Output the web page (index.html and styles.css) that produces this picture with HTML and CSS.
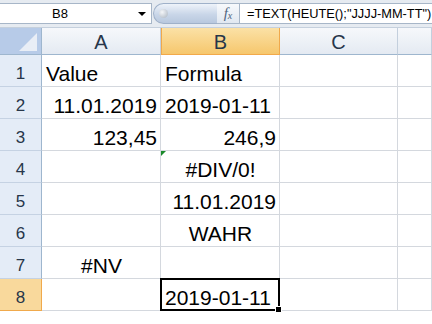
FILE: index.html
```html
<!DOCTYPE html>
<html lang="de">
<head>
    <meta charset="UTF-8">
    <title>Tabelle</title>
    <link rel="stylesheet" href="styles.css">
</head>
<body>
    <div class="toolbar">
        <div class="namebox">
            <span class="name">B8</span>
            <span class="arrow"></span>
        </div>
        <div class="pill"><span class="knob"></span></div>
        <div class="fx"><i>f</i><small>x</small></div>
        <div class="formula">=TEXT(HEUTE();"JJJJ-MM-TT")</div>
    </div>

    <div class="sheet">
        <!-- header row -->
        <div class="corner">
            <svg width="41" height="27" viewBox="0 0 41 27">
                <polygon points="37,5 37,23 19,23" fill="#e9eef6"/>
            </svg>
        </div>
        <div class="colhead">A</div>
        <div class="colhead active">B</div>
        <div class="colhead">C</div>
        <div class="colhead"></div>

        <div class="rowhead">1</div>
        <div class="cell">Value</div>
        <div class="cell">Formula</div>
        <div class="cell"></div>
        <div class="cell"></div>

        <div class="rowhead">2</div>
        <div class="cell right">11.01.2019</div>
        <div class="cell">2019-01-11</div>
        <div class="cell"></div>
        <div class="cell"></div>

        <div class="rowhead">3</div>
        <div class="cell right">123,45</div>
        <div class="cell right">246,9</div>
        <div class="cell"></div>
        <div class="cell"></div>

        <div class="rowhead">4</div>
        <div class="cell"></div>
        <div class="cell center note">#DIV/0!</div>
        <div class="cell"></div>
        <div class="cell"></div>

        <div class="rowhead">5</div>
        <div class="cell"></div>
        <div class="cell right">11.01.2019</div>
        <div class="cell"></div>
        <div class="cell"></div>

        <div class="rowhead">6</div>
        <div class="cell"></div>
        <div class="cell center">WAHR</div>
        <div class="cell"></div>
        <div class="cell"></div>

        <div class="rowhead">7</div>
        <div class="cell center">#NV</div>
        <div class="cell"></div>
        <div class="cell"></div>
        <div class="cell"></div>

        <div class="rowhead active">8</div>
        <div class="cell"></div>
        <div class="cell selected">2019-01-11</div>
        <div class="cell"></div>
        <div class="cell"></div>
    </div>
</body>
</html>
```

FILE: styles.css
```css
* {
    margin: 0;
    padding: 0;
    box-sizing: border-box;
}
html, body {
    width: 432px;
    height: 324px;
    overflow: hidden;
}
body {
    background: #fff;
    font-family: "Liberation Sans", Arial, sans-serif;
    color: #000;
}

/* formula bar */
.toolbar {
    height: 28px;
    display: flex;
    align-items: flex-start;
    padding-top: 3px;
    background: #e6ebf1;
    border-bottom: 1px solid #c5d0dd;
}
.namebox {
    width: 152px;
    height: 21px;
    background: #fff;
    border: 1px solid #a7b6c8;
    border-left: none;
    display: flex;
    align-items: center;
}
.name {
    flex: 1;
    text-align: center;
    font-size: 13px;
    padding-right: 18px;
}
.arrow {
    width: 0;
    height: 0;
    border-left: 4px solid transparent;
    border-right: 4px solid transparent;
    border-top: 4px solid #000;
    margin-right: 5px;
}
.pill {
    width: 64px;
    height: 21px;
    margin-left: 1px;
    border-radius: 11px 0 0 11px;
    background: linear-gradient(#eef3fa, #c9d6e8 55%, #b8c8de);
    border: 1px solid #9fb1c9;
    border-right: none;
    display: flex;
    align-items: center;
    padding-left: 5px;
}
.knob {
    width: 9px;
    height: 9px;
    border-radius: 50%;
    background: radial-gradient(circle at 35% 35%, #f4f6f9, #a9b3bf);
}
.fx {
    width: 22px;
    height: 21px;
    background: linear-gradient(#f7f9fc, #e1e8f1);
    border-top: 1px solid #a7b6c8;
    border-bottom: 1px solid #a7b6c8;
    font-family: "Liberation Serif", serif;
    color: #4f6480;
    font-size: 15px;
    display: flex;
    align-items: center;
    justify-content: center;
    font-style: italic;
}
.fx small {
    font-size: 10px;
    margin-top: 4px;
}
.formula {
    flex: 1;
    height: 21px;
    background: #fff;
    border: 1px solid #a7b6c8;
    border-right: none;
    font-size: 12.8px;
    line-height: 19px;
    padding-left: 7px;
    white-space: nowrap;
}

/* grid */
.sheet {
    display: grid;
    grid-template-columns: 42px 119px 119px 118px 34px;
    grid-template-rows: 27px repeat(8, 32px) 9px;
}
.corner {
    background: #b7cbe8;
    border-right: 1px solid #9eb6ce;
    border-bottom: 1px solid #9eb6ce;
}
.corner svg {
    display: block;
}
.colhead {
    background: linear-gradient(#f6f8fb, #e4eaf2);
    border-right: 1px solid #c3cfdd;
    border-bottom: 1px solid #9eb6ce;
    color: #27364a;
    font-size: 20px;
    text-align: center;
    line-height: 27px;
    padding-top: 1px;
}
.colhead.active {
    background: linear-gradient(#fbe1a6, #f6c76d);
    border-left: 1px solid #f0a94c;
    border-right: 1px solid #f0a94c;
    border-bottom: 1px solid #f2a94a;
}
.rowhead {
    background: #e4ecf7;
    border-right: 1px solid #9eb6ce;
    border-bottom: 1px solid #c5d2e3;
    color: #27364a;
    font-size: 17px;
    text-align: center;
    line-height: 22px;
    padding-top: 8px;
}
.rowhead.active {
    background: #f9d99c;
    border-right: 1px solid #f0a94c;
    border-bottom: 1px solid #f0a94c;
}
.cell {
    border-right: 1px solid #d4d8de;
    border-bottom: 1px solid #d4d8de;
    font-size: 21px;
    line-height: 22px;
    padding: 8px 3px 1px 4px;
    white-space: nowrap;
    position: relative;
}
.cell.right {
    text-align: right;
}
.cell.center {
    text-align: center;
}
.note::before {
    content: "";
    position: absolute;
    left: 0;
    top: 0;
    border-top: 5px solid #1a8a2a;
    border-right: 5px solid transparent;
}
.selected::after {
    content: "";
    position: absolute;
    left: -1px;
    top: -1px;
    right: -1px;
    bottom: -1px;
    border: 2px solid #000;
}
.selected::before {
    content: "";
    position: absolute;
    right: -3px;
    bottom: -3px;
    width: 5px;
    height: 5px;
    background: #000;
    border: 1px solid #fff;
    z-index: 1;
}
```
